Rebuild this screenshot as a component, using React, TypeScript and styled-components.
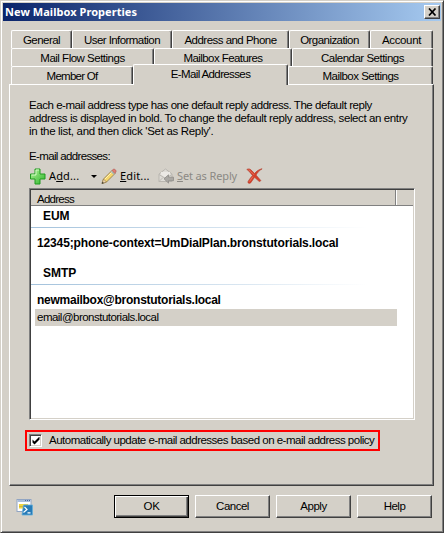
import React from "react";
import styled, { createGlobalStyle } from "styled-components";

const face = "#d4d0c8";
const shadow = "#808080";
const dark = "#404040";

const Global = createGlobalStyle`
  *, *::before, *::after { box-sizing: border-box; }
  body { margin: 0; background: ${face}; }
`;

const Dialog = styled.div`
  width: 444px;
  height: 533px;
  padding: 1px;
  background: ${face};
  border: 1px solid;
  border-color: ${face} ${dark} ${dark} ${face};
  box-shadow: inset 1px 1px #fff, inset -1px -1px ${shadow};
  font: 11.5px/13px "Liberation Sans", Arial, sans-serif;
  color: #000;
  display: flex;
  flex-direction: column;
`;

const Text = styled.span<{ $ls?: number }>`
  letter-spacing: ${(p) => p.$ls ?? -0.5}px;
  white-space: nowrap;
`;

const TitleBar = styled.header`
  height: 18px;
  margin: 1px;
  padding: 0 1px 0 2px;
  display: flex;
  align-items: center;
  justify-content: space-between;
  background: linear-gradient(90deg, #0a246a, #a6caf0);
  color: #fff;
  font: bold 11px/18px "Noto Sans", sans-serif;
`;

const CloseButton = styled.button`
  width: 16px;
  height: 14px;
  padding: 0;
  display: grid;
  place-items: center;
  background: ${face};
  border: 1px solid;
  border-color: #fff ${dark} ${dark} #fff;
  box-shadow: inset -1px -1px ${shadow};
`;

const Tabs = styled.nav`
  margin: 8px 9px 0;
`;

const TabRow = styled.div`
  display: flex;
  height: 18px;
`;

const Tab = styled.div<{ $w: number; $selected?: boolean }>`
  width: ${(p) => p.$w}px;
  height: ${(p) => (p.$selected ? 21 : 18)}px;
  margin-top: ${(p) => (p.$selected ? -2 : 0)}px;
  padding-top: 3px;
  position: relative;
  z-index: ${(p) => (p.$selected ? 1 : 0)};
  flex: none;
  text-align: center;
  background: ${face};
  border: 1px solid;
  border-color: #fff ${dark} transparent #fff;
  border-bottom: 0;
  border-radius: 2px 2px 0 0;
  box-shadow: inset -1px 0 ${shadow};
`;

const Panel = styled.main`
  width: 425px;
  height: 402px;
  margin-left: 7px;
  padding: 14px 17px 0 19px;
  border: 1px solid;
  border-color: #fff ${dark} ${dark} #fff;
  box-shadow: inset -1px -1px ${shadow};
`;

const Paragraph = styled.p`
  margin: 0 0 12px;
  display: flex;
  flex-direction: column;
`;

const Toolbar = styled.div`
  height: 24px;
  margin-top: 1px;
  display: flex;
  align-items: center;
  font: 11px/16px "Noto Sans", sans-serif;
`;

const Tool = styled.div<{ $w: number; $disabled?: boolean }>`
  width: ${(p) => p.$w}px;
  display: flex;
  align-items: center;
  gap: 3px;
  color: ${(p) => (p.$disabled ? "#8b8984" : "#000")};
  svg { flex: none; }
`;

const DropArrow = styled.i`
  margin-left: 9px;
  border: 3px solid transparent;
  border-top-color: #000;
  border-bottom: 0;
`;

const List = styled.section`
  width: 386px;
  height: 232px;
  background: #fff;
  border: 1px solid;
  border-color: ${shadow} #fff #fff ${shadow};
  box-shadow: inset 1px 1px ${dark}, inset -1px -1px ${face};
  padding: 1px;
`;

const ListHeader = styled.div`
  height: 16px;
  display: flex;
  background: ${face};
  border-bottom: 1px solid ${shadow};
`;

const HeaderCell = styled.div`
  width: 365px;
  padding: 3px 0 0 6px;
  line-height: 12px;
  border-right: 1px solid ${shadow};
  box-shadow: 1px 0 #fff;
`;

const GroupTitle = styled.div<{ $gap?: boolean }>`
  height: 22px;
  margin-top: ${(p) => (p.$gap ? 8 : 0)}px;
  padding: 3px 0 0 12px;
  font-size: 12px;
  line-height: 14px;
  font-weight: bold;
  background: linear-gradient(90deg, #a3c2dc, #d9e6f1 55%, #fff 88%) left bottom / 100% 1px no-repeat;
`;

const Row = styled.div<{ $bold?: boolean; $selected?: boolean }>`
  width: 362px;
  height: 17px;
  margin: 0 0 0 4px;
  padding: 2px 0 0 2px;
  font-size: ${(p) => (p.$bold ? 12 : 11.5)}px;
  font-weight: ${(p) => (p.$bold ? "bold" : "normal")};
  background: ${(p) => (p.$selected ? face : "#fff")};
`;

const Spacer = styled.div<{ $h: number }>`
  height: ${(p) => p.$h}px;
`;

const Policy = styled.label`
  width: 355px;
  height: 21px;
  margin: 10px 0 0 -4px;
  padding-left: 2px;
  display: flex;
  align-items: center;
  gap: 7px;
  border: 2px solid #f00;
`;

const CheckBox = styled.span`
  width: 13px;
  height: 13px;
  display: grid;
  place-items: center;
  background: #fff;
  border: 1px solid;
  border-color: ${shadow} #fff #fff ${shadow};
  box-shadow: inset 1px 1px ${dark}, inset -1px -1px ${face};
`;

const Footer = styled.footer`
  height: 23px;
  margin: 9px 9px 0 14px;
  display: flex;
  align-items: center;
  gap: 6px;
`;

const FooterIcon = styled.div`
  width: 92px;
  height: 18px;
`;

const Button = styled.button<{ $primary?: boolean }>`
  width: 75px;
  height: 23px;
  padding: 0;
  font: inherit;
  color: #000;
  background: ${face};
  border: 1px solid;
  border-color: ${(p) => (p.$primary ? "#000" : `#fff ${dark} ${dark} #fff`)};
  box-shadow: ${(p) =>
    p.$primary
      ? `inset 1px 1px #fff, inset -1px -1px ${dark}, inset -2px -2px ${shadow}`
      : `inset -1px -1px ${shadow}`};
`;

const PlusIcon = () => (
  <svg width="17" height="17" viewBox="0 0 17 17">
    <defs>
      <linearGradient id="plus" x1="0" y1="0" x2="1" y2="1">
        <stop offset="0" stopColor="#b5f49a" />
        <stop offset="1" stopColor="#2cb52b" />
      </linearGradient>
    </defs>
    <path d="M6 1h5v5h5v5h-5v5h-5v-5h-4.500v-5h4.500z" fill="url(#plus)" stroke="#219a20" />
    <path d="M7 2h3M7 2v5h-4.500" fill="none" stroke="#d2fbc4" />
  </svg>
);

const PencilIcon = () => (
  <svg width="16" height="17" viewBox="0 0 16 17">
    <path d="M1 15.500l1.500-4.500 8.500-8.500 3 3-8.500 8.500z" fill="#f6d66c" stroke="#8c7440" strokeWidth=".8" />
    <path d="M3.500 11.500l8-8" stroke="#fff3b4" />
    <path d="M11 2.500l1.300-1.200c1.200-.8 3.500 1.300 2.700 2.700l-1.200 1.500z" fill="#e27c72" stroke="#a75a55" strokeWidth=".6" />
    <path d="M10.200 3.300l3 3" stroke="#a4b5bd" strokeWidth="1.300" />
    <path d="M2.500 11l3 3-4.500 1.500z" fill="#ecd3ac" stroke="#8c7440" strokeWidth=".6" />
    <path d="M.8 15.800l.7-2 1.400 1.300z" fill="#333" />
  </svg>
);

const ReplyIcon = () => (
  <svg width="16" height="16" viewBox="0 0 16 16">
    <path d="M1 6l6.500-5L14 6v7.500H1z" fill="#dedcd7" stroke="#b9b6b0" />
    <path d="M3 6.500V4h9v2.500L7.500 10z" fill="#ebe9e5" />
    <path d="M1 6.500l6.500 4L14 6.500M1 13.500l4-4" fill="none" stroke="#bcb9b3" />
    <path d="M6 10.800l4.500-4v2.400h5v3.500h-5v2.400z" fill="#aaa8a4" stroke="#8e8c88" strokeWidth=".8" />
  </svg>
);

const DeleteIcon = () => (
  <svg width="17" height="16" viewBox="0 0 17 16">
    <path d="M.8 1.500c1-.7 2.800-.8 3.800.1l4 3.900c2-2.300 4.200-4.100 7.500-4.700-2.800 1.700-4.600 3.700-6.100 6.300l4.600 5.200c.5.800-1 1.500-1.800.8L8.600 9.300c-1.700 1.900-2.500 4-4 5.600-.9.900-3 .2-2.700-1C3.300 11.200 5 9.400 6.500 7.400L3 3.200C2.400 2.500 1.700 2 .8 1.500z" fill="#d6402a" stroke="#b6402f" strokeWidth=".7" />
    <path d="M2.500 1.800c2 .8 3.500 3.200 5.500 5M3.500 13.500l3.500-5" fill="none" stroke="#ee8570" strokeWidth=".7" />
  </svg>
);

const ScriptIcon = () => (
  <svg width="17" height="18" viewBox="0 0 17 18">
    <rect x="1" y="1.500" width="14" height="12" fill="#fff" stroke="#91a5c3" />
    <path d="M1.500 3h13" stroke="#a9bedc" strokeWidth="2" />
    <path d="M9 2.500h1M11 2.500h1M13 2.500h1" stroke="#4d6898" />
    <path d="M3 7h9M3 9.500h6" stroke="#f0d43c" strokeWidth="2" />
    <path d="M3 8.500h5" stroke="#b99c23" strokeWidth=".7" />
    <path d="M7.500 7h9v10h-10.500z" fill="#287cb8" stroke="#65afd9" strokeWidth=".8" />
    <path d="M8.500 9l2.500 2.500-3.500 3M11.500 14.800h3" fill="none" stroke="#fff" strokeWidth="1.200" />
  </svg>
);

type TabItem = [label: string, width: number, spacing: number, selected?: boolean];
const tabRows: TabItem[][] = [
  [["General", 61, -0.55], ["User Information", 100, -0.56], ["Address and Phone", 117, -0.53], ["Organization", 81, -0.55], ["Account", 63, -0.33]],
  [["Mail Flow Settings", 143, -0.5], ["Mailbox Features", 138, -0.57], ["Calendar Settings", 141, -0.5]],
  [["Member Of", 122, -0.75], ["E-Mail Addresses", 155, -0.62, true], ["Mailbox Settings", 145, -0.52]],
];

export default function App() {
  return (
    <>
      <Global />
      <Dialog>
        <TitleBar>
          <Text $ls={0.05}>New Mailbox Properties</Text>
          <CloseButton aria-label="Close">
            <svg width="9" height="8" viewBox="0 0 9 8">
              <path d="M1 .5l6.500 7M7.500 .5L1 7.500" stroke="#000" strokeWidth="1.700" />
            </svg>
          </CloseButton>
        </TitleBar>
        <Tabs>
          {tabRows.map((row, i) => (
            <TabRow key={i}>
              {row.map(([label, w, ls, selected]) => (
                <Tab key={label} $w={w} $selected={selected}>
                  <Text $ls={ls}>{label}</Text>
                </Tab>
              ))}
            </TabRow>
          ))}
        </Tabs>
        <Panel>
          <Paragraph>
            <Text $ls={-0.45}>Each e-mail address type has one default reply address. The default reply</Text>
            <Text $ls={-0.395}>address is displayed in bold. To change the default reply address, select an entry</Text>
            <Text $ls={-0.32}>in the list, and then click 'Set as Reply'.</Text>
          </Paragraph>
          <Text $ls={-0.65}>E-mail addresses:</Text>
          <Toolbar>
            <Tool $w={72}>
              <PlusIcon />
              <Text $ls={0.15}>A<u>d</u>d...</Text>
              <DropArrow />
            </Tool>
            <Tool $w={57}>
              <PencilIcon />
              <Text $ls={0.15}><u>E</u>dit...</Text>
            </Tool>
            <Tool $w={88} $disabled>
              <ReplyIcon />
              <Text $ls={-0.13}><u>S</u>et as Reply</Text>
            </Tool>
            <DeleteIcon />
          </Toolbar>
          <List>
            <ListHeader>
              <HeaderCell><Text $ls={-0.74}>Address</Text></HeaderCell>
            </ListHeader>
            <GroupTitle><Text $ls={-0.1}>EUM</Text></GroupTitle>
            <Spacer $h={7} />
            <Row $bold><Text $ls={-0.135}>12345;phone-context=UmDialPlan.bronstutorials.local</Text></Row>
            <Spacer $h={3} />
            <GroupTitle $gap><Text $ls={0}>SMTP</Text></GroupTitle>
            <Spacer $h={7} />
            <Row $bold><Text $ls={-0.26}>newmailbox@bronstutorials.local</Text></Row>
            <Row $selected><Text $ls={-0.52}>email@bronstutorials.local</Text></Row>
          </List>
          <Policy>
            <CheckBox>
              <svg width="8" height="8" viewBox="0 0 8 8">
                <path d="M.5 2.500v3l2 2 5-5v-3l-5 5z" fill="#000" />
              </svg>
            </CheckBox>
            <Text $ls={-0.5}>Automatically update e-mail addresses based on e-mail address policy</Text>
          </Policy>
        </Panel>
        <Footer>
          <FooterIcon><ScriptIcon /></FooterIcon>
          <Button $primary><Text $ls={-0.3}>OK</Text></Button>
          <Button><Text>Cancel</Text></Button>
          <Button><Text>Apply</Text></Button>
          <Button><Text>Help</Text></Button>
        </Footer>
      </Dialog>
    </>
  );
}
